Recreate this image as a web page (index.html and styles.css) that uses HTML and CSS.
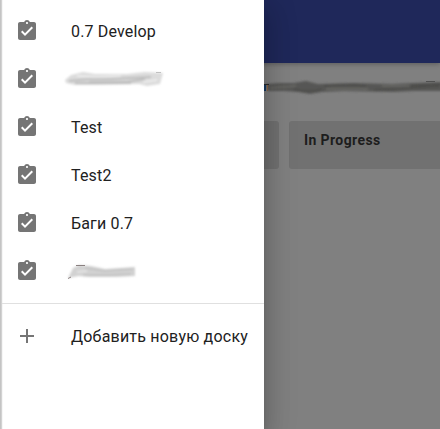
FILE: index.html
```html
<!DOCTYPE html>
<html lang="ru">
<head>
<meta charset="utf-8">
<title>Доски</title>
<link rel="stylesheet" href="styles.css">
</head>
<body>
<svg width="0" height="0" class="defs" aria-hidden="true">
  <defs>
    <symbol id="task" viewBox="0 0 24 24"><path d="M19 3h-4.180C14.400 1.840 13.300 1 12 1c-1.300 0-2.400.840-2.820 2H5c-1.100 0-2 .900-2 2v14c0 1.100.900 2 2 2h14c1.100 0 2-.900 2-2V5c0-1.100-.900-2-2-2zm-7 0c.550 0 1 .450 1 1s-.450 1-1 1-1-.450-1-1 .450-1 1-1zm-2 14l-4-4 1.410-1.410L10 14.170l6.590-6.590L18 9l-8 8z"/></symbol>
    <filter id="soft" x="-10%" y="-50%" width="120%" height="200%"><feGaussianBlur stdDeviation="1"/></filter>
  </defs>
</svg>
<main class="page">
  <header class="toolbar"></header>
  <div class="title">
    <svg width="176" height="20" viewBox="0 0 176 20">
      <g filter="url(#soft)">
        <path fill="#565654" d="M2 7L16 6 30 6 42 4 54 7 90 6 128 7 150 6 180 5V14L150 14 130 15 80 14 58 15 46 17 34 15 20 14 4 14z"/>
        <path fill="none" stroke="#464644" stroke-width="1.200" d="M30 12Q45 16 58 12M60 9Q82 7 102 9M110 13Q140 11 176 9M142 9L176 7"/>
        <path fill="none" stroke="#6c6c69" stroke-width="1.500" d="M6 11L32 9M62 12L104 12M118 9L146 9"/>
      </g>
      <path stroke="#2a2a2a" stroke-width="1" d="M0 7.500h5"/>
      <path stroke="#505050" stroke-width="1" d="M162 4.500h9"/>
      <path stroke="#173a62" stroke-width="2" d="M1 8v6"/>
      <path stroke="#8b6240" stroke-width="1" d="M3.500 8v6"/>
    </svg>
  </div>
  <div class="board">
    <section class="column"></section>
    <section class="column last"><h2>In Progress</h2></section>
  </div>
</main>
<nav class="drawer">
  <a class="item"><svg class="icon"><use href="#task"/></svg><span>0.7 Develop</span></a>
  <a class="item"><svg class="icon"><use href="#task"/></svg>
    <svg class="smudge" width="108" height="24" viewBox="0 0 108 24">
      <g filter="url(#soft)">
        <path fill="#dcdcdc" d="M4 13L10 8 22 5 34 7 66 7 84 5 102 6 99 17 86 19 78 17 36 18 14 18 5 16z"/>
        <path fill="none" stroke="#bebebe" stroke-width="1.800" d="M8 14L28 12 50 12 90 10M28 15L66 15 84 12M14 16L70 16"/>
        <path fill="none" stroke="#f0f0f0" stroke-width="1.500" d="M16 9L34 10 60 9M82 15L96 13"/>
      </g>
      <path stroke="#c0c0c0" stroke-width="1" d="M95 5.500h5"/>
    </svg></a>
  <a class="item"><svg class="icon"><use href="#task"/></svg><span>Test</span></a>
  <a class="item"><svg class="icon"><use href="#task"/></svg><span>Test2</span></a>
  <a class="item"><svg class="icon"><use href="#task"/></svg><span>Баги 0.7</span></a>
  <a class="item"><svg class="icon"><use href="#task"/></svg>
    <svg class="smudge" width="108" height="24" viewBox="0 0 108 24">
      <g filter="url(#soft)">
        <path fill="#d2d2d2" d="M7 19L12 9 18 6 30 7 44 10 74 8V17L56 18 28 18 18 17z"/>
        <path fill="none" stroke="#b8b8b8" stroke-width="1.200" d="M24 9L44 12 72 10M22 16L44 16 70 15"/>
        <path fill="none" stroke="#e8e8e8" stroke-width="1.500" d="M16 13L26 12"/>
      </g>
      <path fill="none" stroke="#8a8080" stroke-width="1" d="M15 6.500L24 6.500M7 19.500L10 18"/>
    </svg></a>
  <hr class="divider">
  <a class="item wide"><svg class="icon" viewBox="0 0 24 24"><path d="M19 13h-6v6h-2v-6H5v-2h6V5h2v6h6v2z"/></svg><span>Добавить новую доску</span></a>
</nav>
</body>
</html>
```
FILE: styles.css
```css
* { box-sizing: border-box; }
body {
  margin: 0;
  height: 429px;
  position: relative;
  overflow: hidden;
  font-family: Roboto, sans-serif;
  background: #808080;
}
.defs { position: absolute; }
.toolbar {
  height: 63px;
  background: #1f285a;
  box-shadow: 0 1px 5px rgba(0, 0, 0, .3);
}
.title {
  height: 58px;
  padding: 14px 0 0 264px;
}
.title svg { display: block; }
.board {
  display: flex;
  gap: 10px;
  padding-left: 9px;
}
.column {
  flex: 0 0 270px;
  height: 48px;
  padding: 10px 15px;
  border-radius: 3px;
  background: #717171;
}
.column.last {
  flex: 1;
  border-radius: 3px 0 0 3px;
}
.column h2 {
  margin: 0;
  font-size: 14px;
  line-height: 18px;
  font-weight: 700;
  letter-spacing: .4px;
  white-space: nowrap;
  color: #1d1d1d;
}
.drawer {
  position: absolute;
  inset: 0 auto 0 0;
  width: 264px;
  padding: 7px 0 0 2px;
  background: linear-gradient(90deg, #c4c4c4 1px, #d2d2d2 1px 2px, #f6f6f6 2px 3px, #fff 3px);
  box-shadow: 0 8px 10px -5px rgba(0, 0, 0, .2), 0 16px 24px 2px rgba(0, 0, 0, .14), 0 6px 30px 5px rgba(0, 0, 0, .12);
}
.item {
  display: flex;
  align-items: center;
  height: 48px;
  padding-left: 13px;
  font-size: 16px;
  letter-spacing: .16px;
  white-space: nowrap;
  color: #212121;
}
.item.wide { letter-spacing: .21px; }
.icon {
  flex: none;
  width: 24px;
  height: 24px;
  margin-right: 32px;
  fill: #757575;
}
.smudge {
  flex: none;
  margin-left: -10px;
}
.divider {
  height: 1px;
  margin: 8px 0;
  border: 0;
  background: #e0e0e0;
}
```
